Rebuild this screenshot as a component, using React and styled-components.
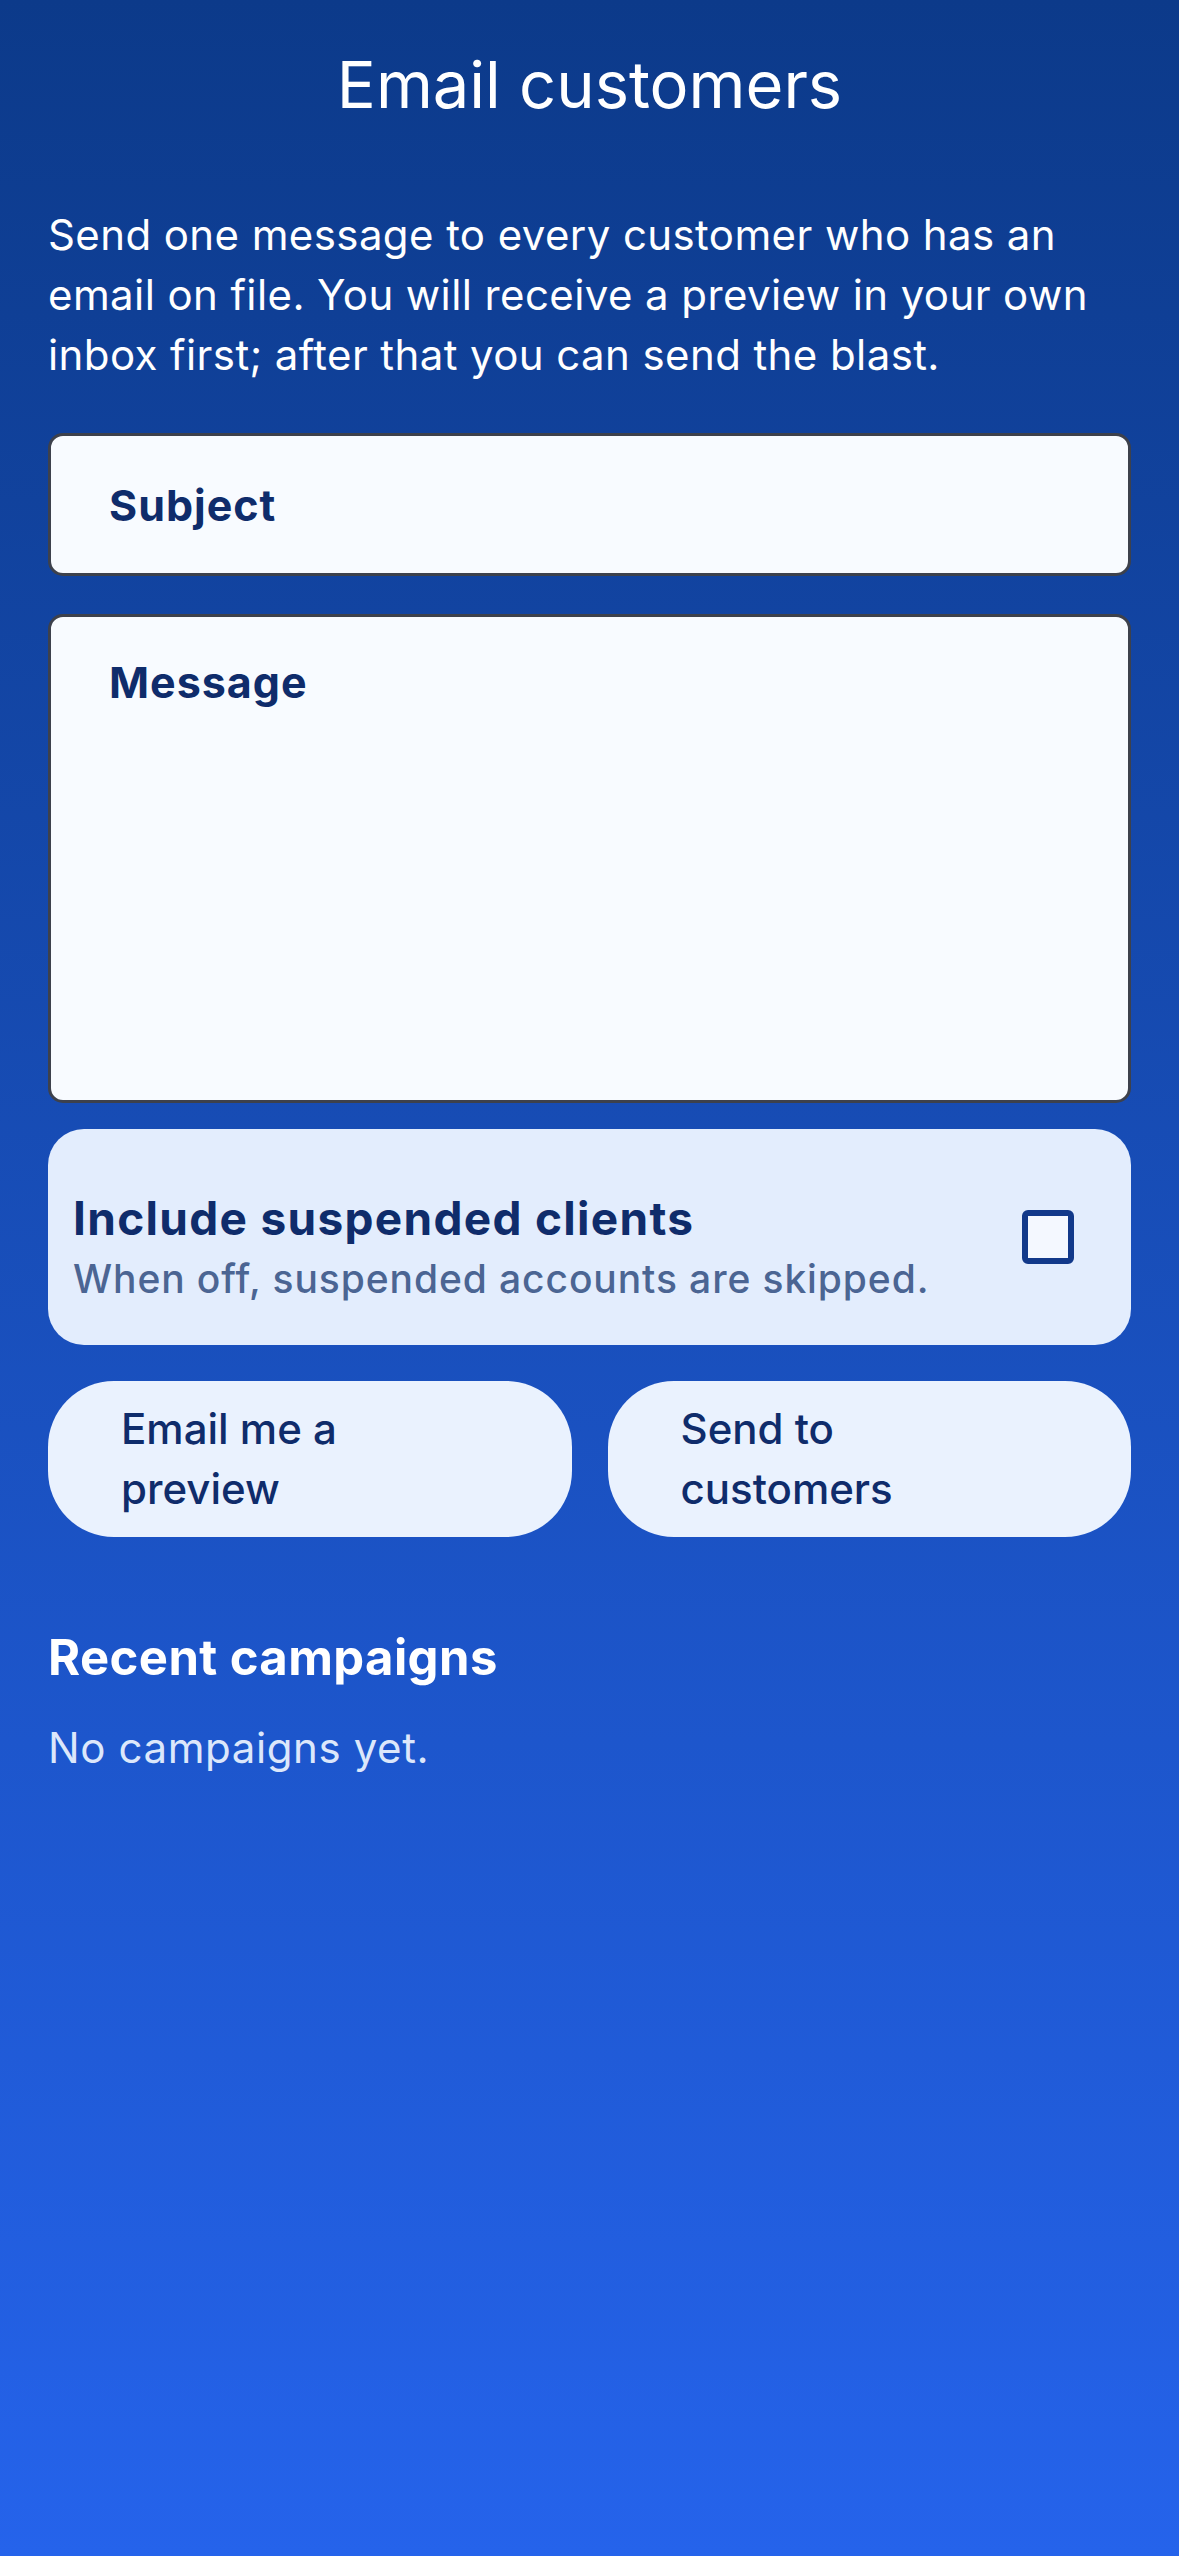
import React from "react";
import styled, { createGlobalStyle } from "styled-components";

const GlobalStyle = createGlobalStyle`
  html, body { margin: 0; padding: 0; }
  body {
    font-family: Inter, "Noto Sans", "Liberation Sans", sans-serif;
    -webkit-font-smoothing: antialiased;
  }
  * { box-sizing: border-box; }
`;

const Page = styled.div`
  min-height: 2556px;
  background: linear-gradient(180deg, #0c3a8a 0%, #2563eb 100%);
  padding: 47px 48px 60px;
  display: flex;
  flex-direction: column;
`;

const Title = styled.h1`
  margin: 0;
  text-align: center;
  color: #ffffff;
  font-size: 65px;
  line-height: 76px;
  font-weight: 400;
`;

const Intro = styled.p`
  margin: 82px 0 0;
  color: #ffffff;
  font-size: 42px;
  line-height: 60px;
  font-weight: 400;
  letter-spacing: 0.4px;
`;

const Field = styled.div`
  margin-top: ${(p) => p.$mt}px;
  height: ${(p) => p.$h}px;
  background: #f8fbff;
  border: 3px solid #3d414c;
  border-radius: 15px;
  padding: 0 58px;
  display: flex;
  align-items: ${(p) => (p.$multiline ? "flex-start" : "center")};
  padding-top: ${(p) => (p.$multiline ? "40px" : "0")};
`;

const FieldLabel = styled.span`
  color: #0f2c6b;
  font-size: 43px;
  line-height: 50px;
  font-weight: 700;
  letter-spacing: 1px;
`;

const ToggleCard = styled.label`
  margin-top: 26px;
  height: 216px;
  background: #e3edfd;
  border-radius: 36px;
  padding: 0 57px 0 25px;
  display: flex;
  align-items: center;
  justify-content: space-between;
`;

const ToggleText = styled.div`
  display: flex;
  flex-direction: column;
  gap: 10px;
  margin-top: 20px;
`;

const ToggleTitle = styled.span`
  color: #0f2c6b;
  font-size: 46px;
  line-height: 54px;
  font-weight: 700;
  letter-spacing: 1.3px;
`;

const ToggleHint = styled.span`
  color: #4b6593;
  font-size: 39px;
  line-height: 48px;
  font-weight: 500;
  letter-spacing: 0.9px;
`;

const CheckBox = styled.span`
  width: 52px;
  height: 54px;
  border: 6px solid #12398a;
  border-radius: 6px;
  background: #f4f8ff;
  flex-shrink: 0;
`;

const ButtonRow = styled.div`
  margin-top: 36px;
  display: grid;
  grid-template-columns: 1fr 1fr;
  gap: 36px;
`;

const PillButton = styled.button`
  height: 156px;
  border: none;
  border-radius: 66px;
  background: #eaf2fe;
  color: #0f2c6b;
  font-family: inherit;
  font-size: 42px;
  line-height: 60px;
  font-weight: 500;
  text-align: left;
  padding: 0 120px 0 73px;
  cursor: pointer;
`;

const SectionTitle = styled.h2`
  margin: 92px 0 0;
  color: #ffffff;
  font-size: 49px;
  line-height: 58px;
  font-weight: 700;
  letter-spacing: 0.4px;
`;

const EmptyNote = styled.p`
  margin: 34px 0 0;
  color: #dce7fb;
  font-size: 42px;
  line-height: 54px;
  font-weight: 400;
  letter-spacing: 0.6px;
`;

export default function App() {
  return (
    <>
      <GlobalStyle />
      <Page>
        <Title>Email customers</Title>
        <Intro>
          Send one message to every customer who has an email on file. You will
          receive a preview in your own inbox first; after that you can send the
          blast.
        </Intro>
        <Field $mt={48} $h={143}>
          <FieldLabel>Subject</FieldLabel>
        </Field>
        <Field $mt={38} $h={489} $multiline>
          <FieldLabel>Message</FieldLabel>
        </Field>
        <ToggleCard>
          <ToggleText>
            <ToggleTitle>Include suspended clients</ToggleTitle>
            <ToggleHint>When off, suspended accounts are skipped.</ToggleHint>
          </ToggleText>
          <CheckBox />
        </ToggleCard>
        <ButtonRow>
          <PillButton>Email me a preview</PillButton>
          <PillButton>Send to customers</PillButton>
        </ButtonRow>
        <SectionTitle>Recent campaigns</SectionTitle>
        <EmptyNote>No campaigns yet.</EmptyNote>
      </Page>
    </>
  );
}
